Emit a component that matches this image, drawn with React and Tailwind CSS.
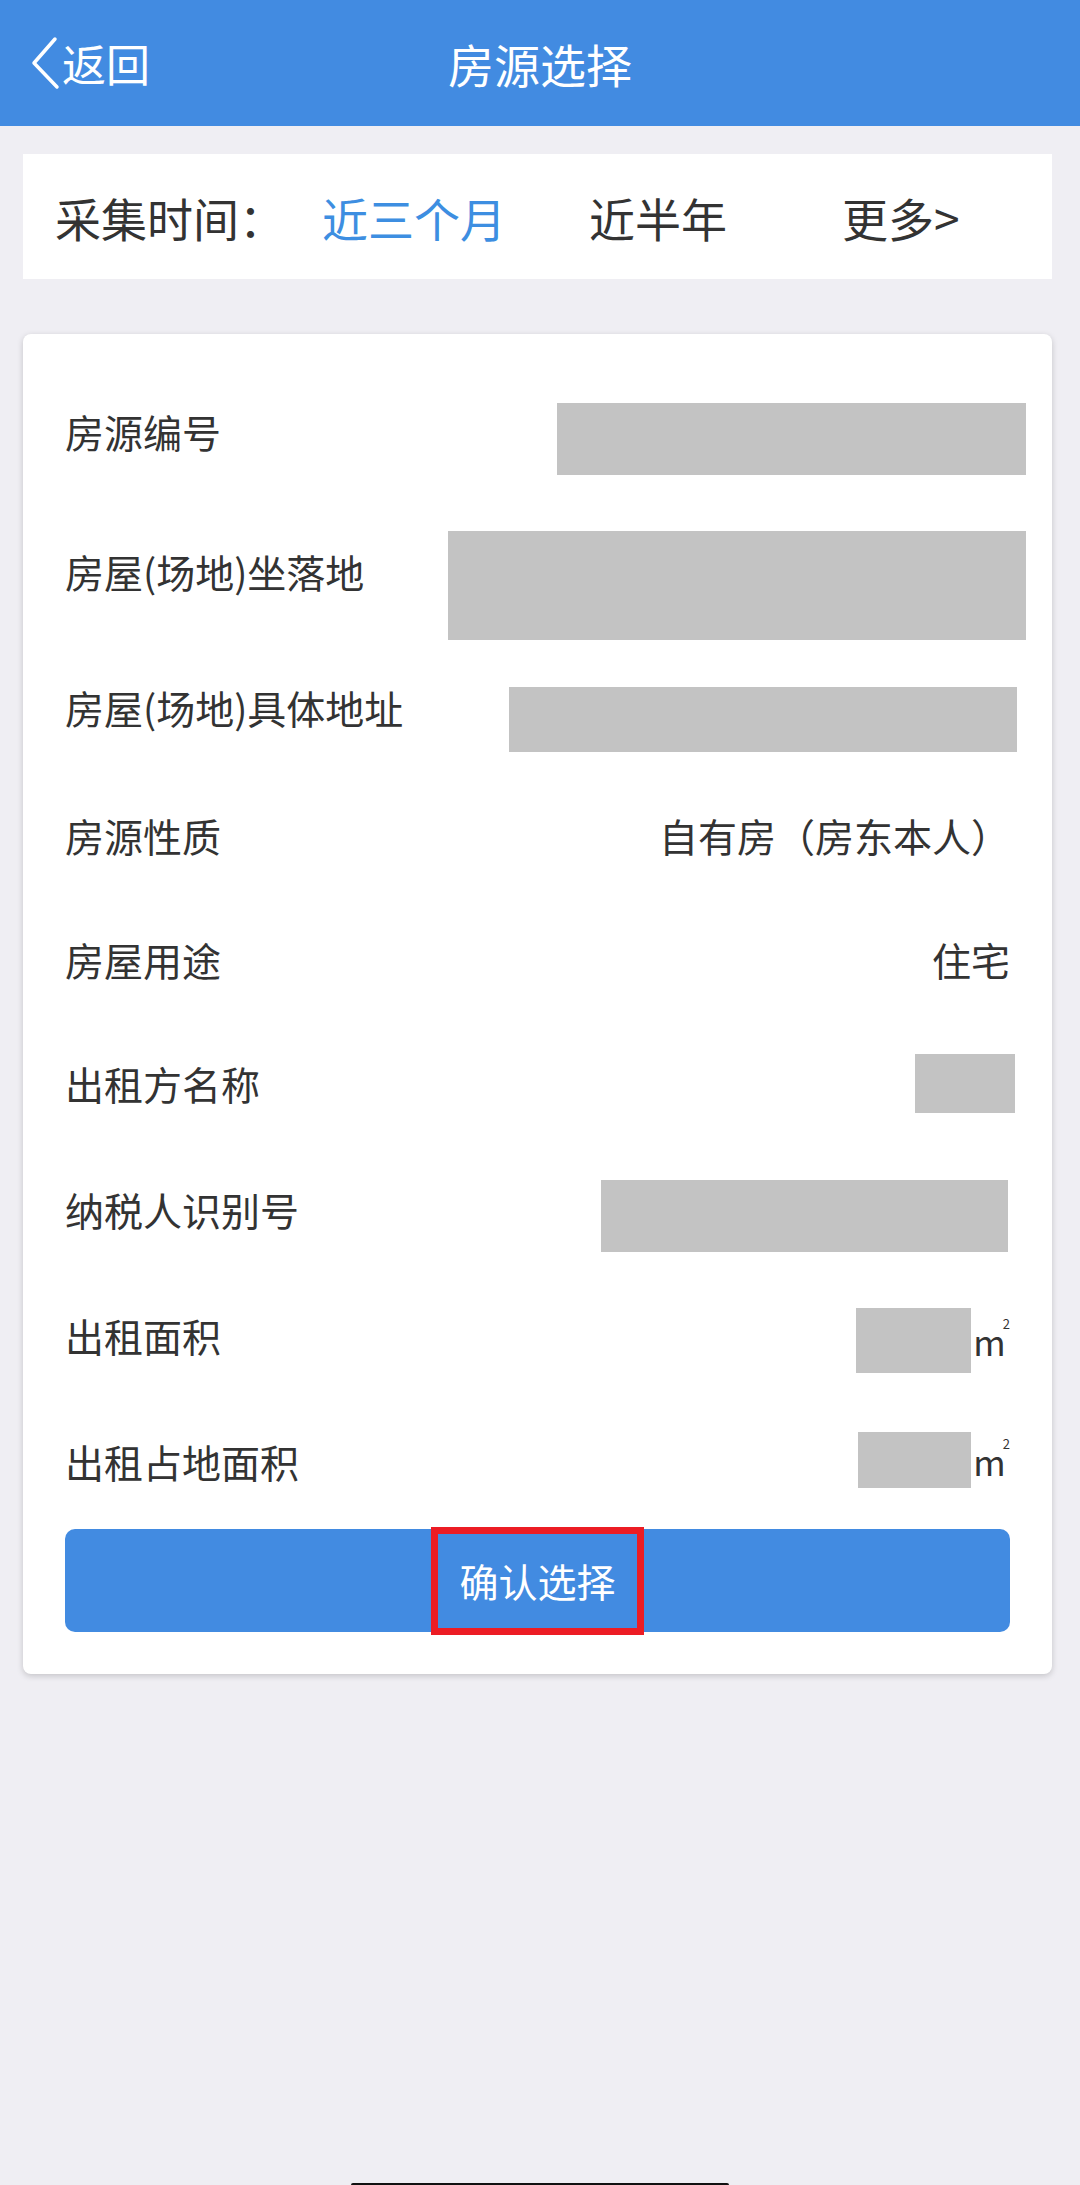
import React from 'react';

const font = { fontFamily: '"Noto Sans CJK SC", "Noto Sans", sans-serif' };

const Box = ({ className }) => <div className={`bg-[#c3c3c3] ${className}`} />;

const Unit = () => (
  <span className="ml-[2px] flex items-start text-[35px] leading-none text-[#333]">
    m<span className="text-[13px] leading-none -ml-[3px] -mt-[6px]">2</span>
  </span>
);

const Text = ({ children }) => <span className="pb-[10px] text-[39px] leading-none text-[#333]">{children}</span>;

const rows = [
  { label: '房源编号', h: 'h-[140px]', value: <Box className="w-[469px] h-[72px] mt-[6px] -mr-[16px]" /> },
  { label: '房屋(场地)坐落地', h: 'h-[140px]', value: <Box className="w-[578px] h-[109px] mt-[19px] -mr-[16px]" /> },
  { label: '房屋(场地)具体地址', h: 'h-[132px]', value: <Box className="w-[508px] h-[65px] mt-[15px] -mr-[7px]" /> },
  { label: '房源性质', h: 'h-[124px]', value: <Text>自有房（房东本人）</Text> },
  { label: '房屋用途', h: 'h-[124px]', value: <Text>住宅</Text> },
  { label: '出租方名称', h: 'h-[125px]', value: <Box className="w-[100px] h-[59px] mb-[10px] -mr-[5px]" /> },
  { label: '纳税人识别号', h: 'h-[126px]', value: <Box className="w-[407px] h-[72px] mt-[4px] mr-[2px]" /> },
  { label: '出租面积', h: 'h-[126px]', value: <div className="flex items-center"><Box className="w-[115px] h-[65px]" /><Unit /></div> },
  { label: '出租占地面积', h: 'h-[126px]', value: <div className="flex items-center mb-[12px]"><Box className="w-[113px] h-[56px]" /><Unit /></div> },
];

export default function App() {
  return (
    <div className="h-[2185px] bg-[#efeef3] flex flex-col overflow-hidden" style={font}>
      {/* header */}
      <header className="relative h-[126px] bg-[#428be1] flex items-center justify-center text-white">
        <button className="absolute left-[30px] top-[36px] flex items-center">
          <svg width="30" height="54" viewBox="0 0 30 54" fill="none">
            <path d="M25 3 L4 27 L27 51" stroke="white" strokeWidth="3.5" strokeLinecap="round" strokeLinejoin="round" />
          </svg>
          <span className="text-[44px] leading-none ml-[2px]">返回</span>
        </button>
        <h1 className="text-[46px] leading-none">房源选择</h1>
      </header>

      {/* time filter */}
      <div className="ml-[23px] mr-[28px] mt-[28px] h-[125px] bg-white flex items-center pl-[32px] text-[46px] leading-none text-[#333]">
        <span className="w-[267px]">采集时间：</span>
        <span className="w-[267px] text-[#3d8ee1]">近三个月</span>
        <span className="w-[253px]">近半年</span>
        <span>更多&gt;</span>
      </div>

      {/* detail card */}
      <div className="ml-[23px] mr-[28px] mt-[55px] bg-white rounded-[8px] shadow-[0_2px_6px_rgba(0,0,0,0.18)] px-[42px] pt-[32px] pb-[42px]">
        {rows.map(r => (
          <div key={r.label} className={`${r.h} flex items-center justify-between`}>
            <Text>{r.label}</Text>
            {r.value}
          </div>
        ))}
        <button className="w-full h-[103px] rounded-[10px] bg-[#428be1] flex items-center justify-center">
          <span className="w-[213px] h-[108px] border-[7px] border-[#ec1c24] flex items-center justify-center text-white text-[39px] leading-none">
            确认选择
          </span>
        </button>
      </div>

      <div className="mt-auto mx-auto w-[378px] h-[2px] bg-[#111] rounded-t-full" />
    </div>
  );
}
